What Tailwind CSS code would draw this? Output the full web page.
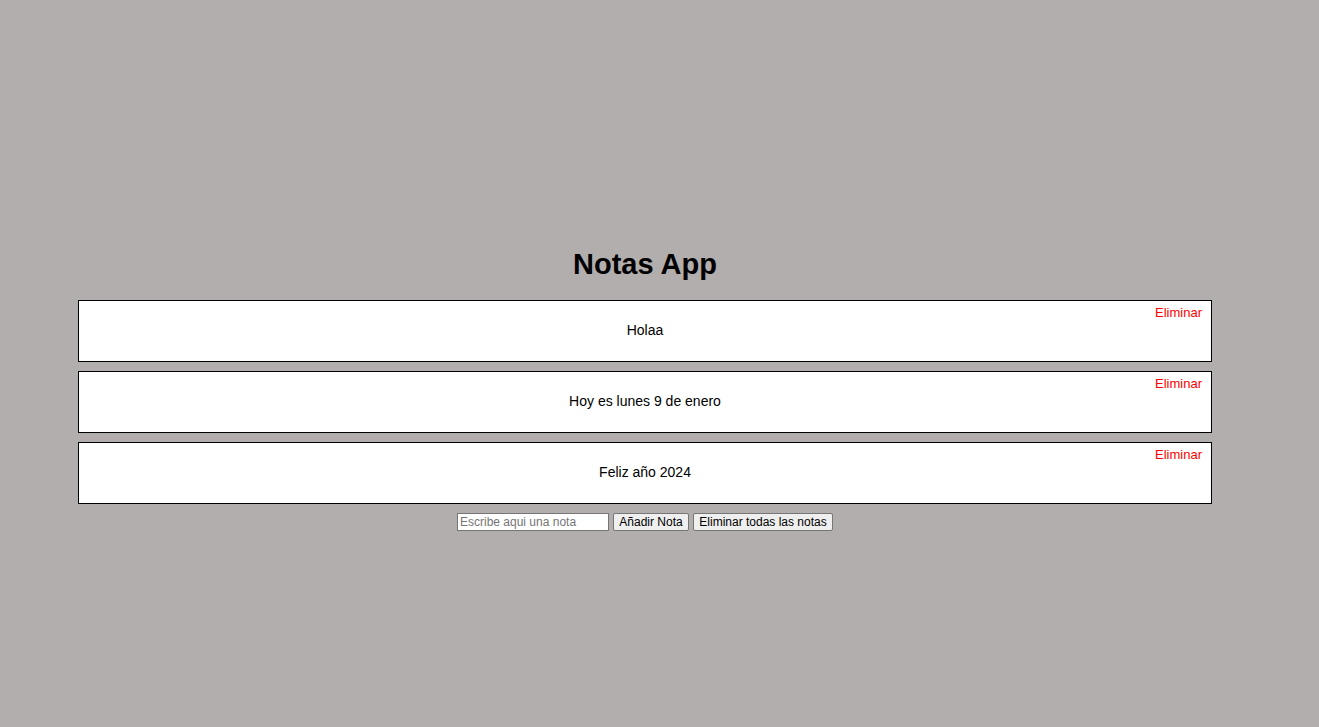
<!DOCTYPE html>
<html lang="es">
<head>
<meta charset="utf-8">
<meta name="viewport" content="width=device-width, initial-scale=1">
<title>Notas App</title>
<script src="https://cdn.jsdelivr.net/npm/@tailwindcss/browser@4"></script>
</head>
<body class="flex min-h-screen flex-col items-center justify-center bg-[#b2aead] pt-[49px] pr-[107px] pb-0 pl-[78px] text-center font-['Liberation_Sans',Arial,sans-serif] text-sm text-black">
<h1 class="mb-[18px] text-[29px] leading-9 font-bold">Notas App</h1>
<ul class="flex w-full flex-col gap-[9px]">
<li class="relative border border-black bg-white pt-[19px] pb-[21px]"><p>Holaa</p><button type="button" class="absolute top-1 right-[9px] text-[13px] leading-4 text-[#ff0000]">Eliminar</button></li>
<li class="relative border border-black bg-white pt-[19px] pb-[21px]"><p>Hoy es lunes 9 de enero</p><button type="button" class="absolute top-1 right-[9px] text-[13px] leading-4 text-[#ff0000]">Eliminar</button></li>
<li class="relative border border-black bg-white pt-[19px] pb-[21px]"><p>Feliz año 2024</p><button type="button" class="absolute top-1 right-[9px] text-[13px] leading-4 text-[#ff0000]">Eliminar</button></li>
</ul>
<form class="mt-[9px] flex gap-1 text-xs">
<input type="text" aria-label="Nota" placeholder="Escribe aqui una nota" class="h-[18px] w-[152px] border border-[#767676] bg-white px-[2px] leading-4 placeholder:text-[#757575]">
<button type="button" class="h-[18px] min-w-[76px] rounded-xs border border-[#767676] bg-[#efefef] px-[5px] leading-4">Añadir Nota</button>
<button type="button" class="h-[18px] min-w-[140px] rounded-xs border border-[#767676] bg-[#efefef] px-[5px] leading-4">Eliminar todas las notas</button>
</form>
</body>
</html>
